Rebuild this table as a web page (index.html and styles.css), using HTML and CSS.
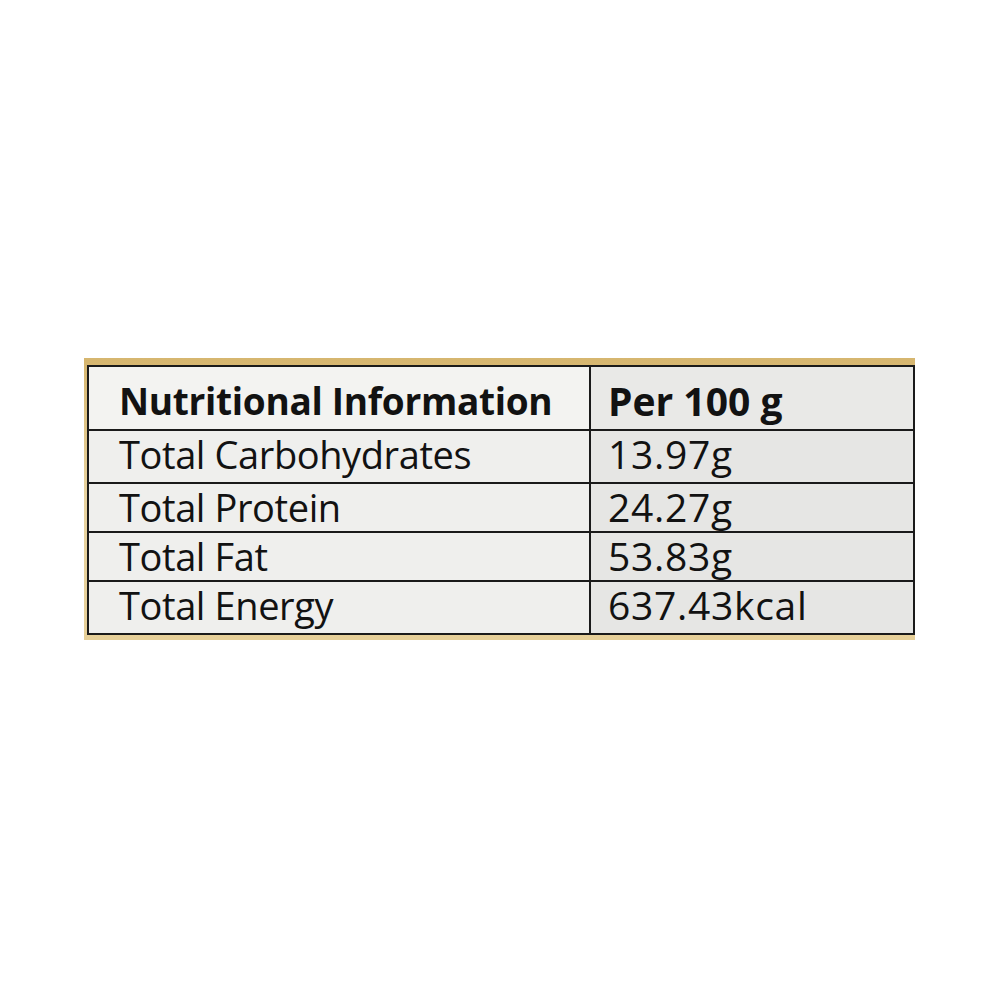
FILE: index.html
```html
<!DOCTYPE html>
<html>
<head>
<meta charset="utf-8">
<link rel="stylesheet" href="styles.css">
</head>
<body>
<div class="page">
  <div class="frame">
    <table class="nutri">
      <tr class="head">
        <th class="c1">Nutritional Information</th>
        <th class="c2">Per 100 g</th>
      </tr>
      <tr class="r1">
        <td class="c1">Total Carbohydrates</td>
        <td class="c2">13.97g</td>
      </tr>
      <tr class="r2">
        <td class="c1">Total Protein</td>
        <td class="c2">24.27g</td>
      </tr>
      <tr class="r3">
        <td class="c1">Total Fat</td>
        <td class="c2">53.83g</td>
      </tr>
      <tr class="r4">
        <td class="c1">Total Energy</td>
        <td class="c2">637.43kcal</td>
      </tr>
    </table>
  </div>
</div>
</body>
</html>
```
FILE: styles.css
```css
html, body {
  margin: 0;
  padding: 0;
  background: #ffffff;
}
.page {
  width: 1000px;
  height: 1000px;
  padding-top: 358px;
  padding-left: 84px;
  box-sizing: border-box;
}
.frame {
  width: 831px;
  box-sizing: border-box;
  padding: 7px 0 5px 3px;
  background: linear-gradient(#d6b66f, #e8d3a0 50%, #e6cf98);
}
.nutri {
  width: 828px;
  border-collapse: collapse;
  font-family: "Open Sans", "Noto Sans", sans-serif;
  color: #121212;
  background: #ebebe9;
  border: 2px solid #262626;
}
.nutri th, .nutri td {
  border: 2px solid #1a1a1a;
  text-align: left;
  vertical-align: top;
  line-height: 44px;
  padding: 0;
  box-sizing: border-box;
}
.nutri th {
  font-weight: 700;
  font-size: 37px;
  letter-spacing: -0.3px;
  height: 64px;
  padding-top: 12px;
}
.nutri th.c2 {
  font-size: 39px;
  letter-spacing: 0;
}
.nutri td {
  font-weight: 400;
  font-size: 38px;
  letter-spacing: -0.4px;
  padding-top: 1px;
}
.nutri td.c2 {
  font-size: 39px;
  letter-spacing: 0.7px;
  line-height: 42px;
  padding-top: 2px;
}
.r1 td, .r4 td { height: 53px; }
.r2 td, .r3 td { height: 49px; }
.c1 {
  width: 502px;
  padding-left: 30px !important;
  background: #efefed;
}
.c2 {
  padding-left: 17px !important;
  background: #e6e6e4;
}
.head .c1 { background: #f3f3f1; }
.head .c2 { background: #e9e9e7; }
```
